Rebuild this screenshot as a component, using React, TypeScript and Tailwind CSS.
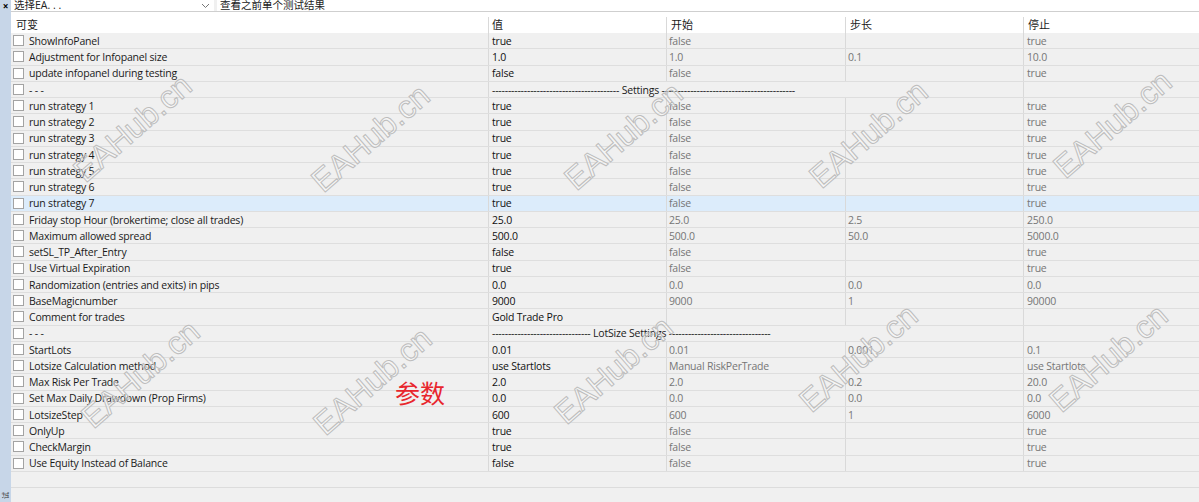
import React from 'react';

type Row = {
  name: string;
  value: string;
  start?: string;
  step?: string;
  stop?: string;
  sep?: boolean;
  active?: boolean;
};

const d = (n: number) => '-'.repeat(n);

const ROWS: Row[] = [
  { name: 'ShowInfoPanel', value: 'true', start: 'false', stop: 'true' },
  { name: 'Adjustment for Infopanel size', value: '1.0', start: '1.0', step: '0.1', stop: '10.0' },
  { name: 'update infopanel during testing', value: 'false', start: 'false', stop: 'true' },
  { name: '- - -', value: `${d(40)} Settings ${d(42)}`, sep: true },
  { name: 'run strategy 1', value: 'true', start: 'false', stop: 'true' },
  { name: 'run strategy 2', value: 'true', start: 'false', stop: 'true' },
  { name: 'run strategy 3', value: 'true', start: 'false', stop: 'true' },
  { name: 'run strategy 4', value: 'true', start: 'false', stop: 'true' },
  { name: 'run strategy 5', value: 'true', start: 'false', stop: 'true' },
  { name: 'run strategy 6', value: 'true', start: 'false', stop: 'true' },
  { name: 'run strategy 7', value: 'true', start: 'false', stop: 'true', active: true },
  { name: 'Friday stop Hour (brokertime; close all trades)', value: '25.0', start: '25.0', step: '2.5', stop: '250.0' },
  { name: 'Maximum allowed spread', value: '500.0', start: '500.0', step: '50.0', stop: '5000.0' },
  { name: 'setSL_TP_After_Entry', value: 'false', start: 'false', stop: 'true' },
  { name: 'Use Virtual Expiration', value: 'true', start: 'false', stop: 'true' },
  { name: 'Randomization (entries and exits) in pips', value: '0.0', start: '0.0', step: '0.0', stop: '0.0' },
  { name: 'BaseMagicnumber', value: '9000', start: '9000', step: '1', stop: '90000' },
  { name: 'Comment for trades', value: 'Gold Trade Pro' },
  { name: '- - -', value: `${d(31)} LotSize Settings ${d(32)}`, sep: true },
  { name: 'StartLots', value: '0.01', start: '0.01', step: '0.001', stop: '0.1' },
  { name: 'Lotsize Calculation method', value: 'use Startlots', start: 'Manual RiskPerTrade', stop: 'use Startlots' },
  { name: 'Max Risk Per Trade', value: '2.0', start: '2.0', step: '0.2', stop: '20.0' },
  { name: 'Set Max Daily Drawdown (Prop Firms)', value: '0.0', start: '0.0', step: '0.0', stop: '0.0' },
  { name: 'LotsizeStep', value: '600', start: '600', step: '1', stop: '6000' },
  { name: 'OnlyUp', value: 'true', start: 'false', stop: 'true' },
  { name: 'CheckMargin', value: 'true', start: 'false', stop: 'true' },
  { name: 'Use Equity Instead of Balance', value: 'false', start: 'false', stop: 'true' },
];

const WATERMARKS = [
  [134, 130], [372, 140], [625, 138], [870, 136], [1114, 126],
  [142, 376], [374, 383], [615, 372], [860, 360], [1110, 360],
];

const cols = 'grid grid-cols-[477px_178px_179px_178px_1fr]';

function Checkbox() {
  return <span className="w-[11px] h-[11px] border border-[#a3a3a3] bg-white shrink-0" />;
}

function ParamRow({ row }: { row: Row }) {
  const bg = row.active ? 'bg-[#dcecfb]' : 'bg-[#f0f0f0]';
  return (
    <div className={`${cols} h-[16.25px] border-b border-[#dedede] ${bg} text-[10.5px] tracking-[-0.2px] leading-none`}>
      <div className="flex items-center gap-[5px] pl-[2px] text-[#1a1a1a] whitespace-nowrap">
        <Checkbox />
        <span className="pt-[1px]">{row.name}</span>
      </div>
      {row.sep ? (
        <>
          <div className="col-span-3 flex items-center pl-[3px] pt-[1px] border-l border-[#d9d9d9] whitespace-nowrap text-[#1a1a1a]">
            {row.value}
          </div>
          <div className="border-l border-[#d9d9d9]" />
        </>
      ) : (
        <>
          <div className="flex items-center pl-[3px] pt-[1px] border-l border-[#d9d9d9] text-[#111] whitespace-nowrap">{row.value}</div>
          <div className="flex items-center pl-[2px] pt-[1px] border-l border-[#d9d9d9] text-[#767676] whitespace-nowrap">{row.start}</div>
          <div className="flex items-center pl-[2px] pt-[1px] border-l border-[#d9d9d9] text-[#767676] whitespace-nowrap">{row.step}</div>
          <div className="flex items-center pl-[3px] pt-[1px] border-l border-[#d9d9d9] text-[#767676] whitespace-nowrap">{row.stop}</div>
        </>
      )}
    </div>
  );
}

export default function App() {
  return (
    <div
      className="relative w-[1199px] h-[502px] overflow-hidden flex bg-[#f0f0f0]"
      style={{ fontFamily: '"Open Sans", "Noto Sans CJK SC", sans-serif' }}
    >
      {/* side strip */}
      <div className="w-[11px] shrink-0 bg-[#c7d6e8] flex flex-col items-center justify-between pt-[1px] pb-[3px]">
        <span className="text-[10px] leading-none font-bold text-black">×</span>
        <span className="text-[7px] leading-none text-[#333] -rotate-90">试</span>
      </div>

      <div className="flex-1 flex flex-col">
        {/* top selectors */}
        <div className="h-[12px] flex gap-[3px] border-b border-[#cfcfcf] bg-[#f0f0f0]">
          <div className="w-[203px] bg-white flex items-center justify-between pl-[3px] pr-[4px] text-[10.5px] leading-[11px] text-[#222]">
            <span>选择EA. . .</span>
            <svg width="9" height="6" viewBox="0 0 9 6">
              <path d="M1 1l3.5 3.5L8 1" fill="none" stroke="#777" strokeWidth="1" />
            </svg>
          </div>
          <div className="flex-1 bg-white flex items-center pl-[3px] text-[10.5px] leading-[11px] text-[#222]">
            <span>查看之前单个测试结果</span>
          </div>
        </div>

        {/* header */}
        <div className={`${cols} h-[21px] bg-white text-[11px] leading-none text-[#1a1a1a]`}>
          <div className="flex items-center pl-[5px] pt-[4px]">可变</div>
          <div className="flex items-center pl-[3px] border-l border-[#d9d9d9] mt-[5px]"><span className="-mt-[1px]">值</span></div>
          <div className="flex items-center pl-[4px] border-l border-[#d9d9d9] mt-[5px]"><span className="-mt-[1px]">开始</span></div>
          <div className="flex items-center pl-[4px] border-l border-[#d9d9d9] mt-[5px]"><span className="-mt-[1px]">步长</span></div>
          <div className="flex items-center pl-[4px] border-l border-[#d9d9d9] mt-[5px]"><span className="-mt-[1px]">停止</span></div>
        </div>

        {/* rows */}
        <div className="flex flex-col">
          {ROWS.map((r, i) => (
            <ParamRow key={i} row={r} />
          ))}
        </div>
        <div className="h-[16px] border-b border-[#dcdcdc]" />
        <div className="flex-1" />
      </div>

      {/* watermark overlay */}
      <svg className="absolute inset-0 pointer-events-none" width="1199" height="502">
        {WATERMARKS.map(([x, y], i) => (
          <text
            key={i}
            x={x}
            y={y}
            textAnchor="middle"
            dominantBaseline="middle"
            transform={`rotate(-41 ${x} ${y})`}
            fontSize="32"
            fontFamily="Arial, 'Liberation Sans', sans-serif"
            fill="rgba(255,255,255,0.35)"
            stroke="#bdbdbd"
            strokeWidth="1"
          >
            EAHub.cn
          </text>
        ))}
      </svg>

      <span
        className="absolute left-[395px] top-[380px] text-[25px] leading-none text-[#e8262d]"
        style={{ fontFamily: '"Noto Sans CJK SC", sans-serif' }}
      >
        参数
      </span>
    </div>
  );
}
